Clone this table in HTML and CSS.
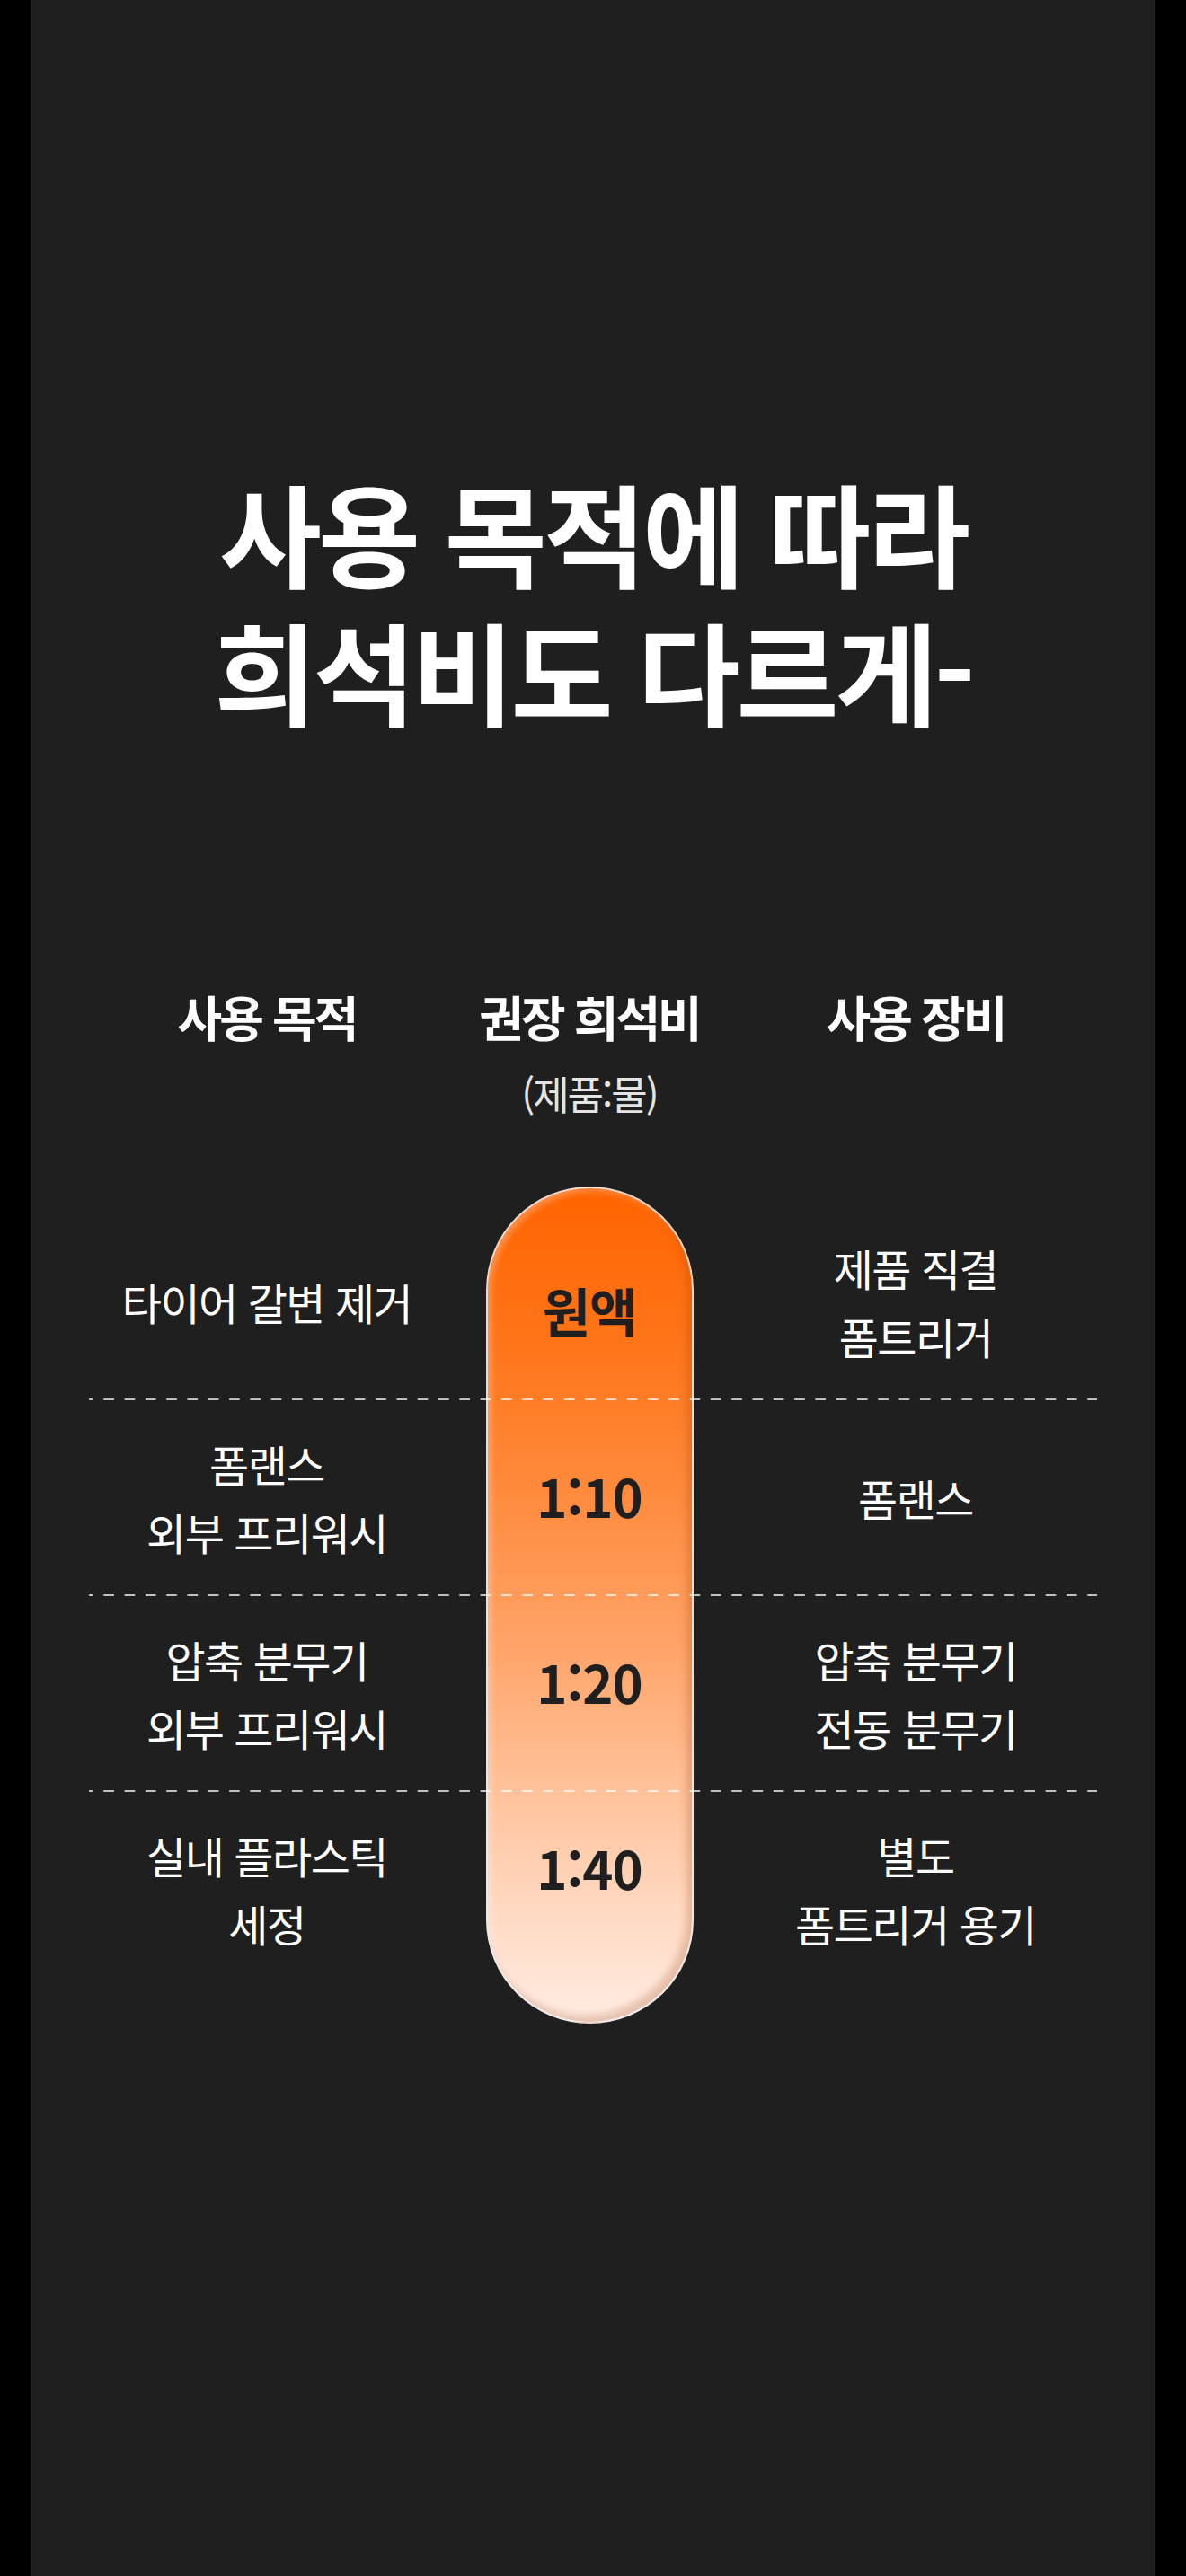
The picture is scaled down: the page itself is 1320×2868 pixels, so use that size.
FILE: index.html
```html
<!DOCTYPE html>
<html lang="ko">
<head>
<meta charset="utf-8">
<title>희석비</title>
<link rel="stylesheet" href="styles.css">
</head>
<body>
<main class="page">
  <h1 class="title">사용 목적에 따라<br>희석비도 다르게-</h1>

  <div class="head">
    <div class="head-cell">사용 목적</div>
    <div class="head-cell">권장 희석비<span class="head-sub">(제품:물)</span></div>
    <div class="head-cell">사용 장비</div>
  </div>

  <div class="table">
    <div class="pill">
      <div class="ratio">원액</div>
      <div class="ratio">1:10</div>
      <div class="ratio">1:20</div>
      <div class="ratio">1:40</div>
    </div>

    <div class="cell left r1">타이어 갈변 제거</div>
    <div class="cell right r1">제품 직결<br>폼트리거</div>

    <div class="line r2"></div>
    <div class="cell left r2">폼랜스<br>외부 프리워시</div>
    <div class="cell right r2">폼랜스</div>

    <div class="line r3"></div>
    <div class="cell left r3">압축 분무기<br>외부 프리워시</div>
    <div class="cell right r3">압축 분무기<br>전동 분무기</div>

    <div class="line r4"></div>
    <div class="cell left r4">실내 플라스틱<br>세정</div>
    <div class="cell right r4">별도<br>폼트리거 용기</div>
  </div>
</main>
</body>
</html>
```

FILE: styles.css
```css
html, body {
  margin: 0;
  padding: 0;
  background: #000;
}

body {
  font-family: "Noto Sans CJK KR", "Noto Sans", sans-serif;
  color: #fff;
}

.page {
  width: 1252px;
  min-height: 2868px;
  margin: 0 auto;
  background: #1f1f1f;
  padding-top: 514px;
  box-sizing: border-box;
}

.title {
  margin: 0;
  text-align: center;
  font-size: 124px;
  line-height: 154px;
  font-weight: 700;
  letter-spacing: -4px;
  color: #fff;
}

.head {
  width: 1122px;
  margin: 275px auto 0;
  display: grid;
  grid-template-columns: 396px 322px 404px;
}

.head-cell {
  display: flex;
  flex-direction: column;
  align-items: center;
  font-size: 54px;
  line-height: 70px;
  font-weight: 700;
  letter-spacing: -3px;
  color: #fff;
}

.head-sub {
  margin-top: 20px;
  font-size: 44px;
  line-height: 60px;
  font-weight: 400;
  letter-spacing: -2px;
  color: #e4e4e4;
}

.table {
  width: 1122px;
  margin: 74px auto 0;
  display: grid;
  grid-template-columns: 396px 322px 404px;
  grid-template-rows: 19px 218px 218px 218px 218px 41px;
}

.pill {
  grid-column: 2;
  grid-row: 1 / -1;
  justify-self: center;
  width: 231px;
  box-sizing: border-box;
  border-radius: 116px;
  border: 2px solid rgba(235, 235, 235, 0.85);
  background: linear-gradient(180deg, #ff6400 0%, #ff7418 18%, #ff8a3c 36%, #ffa266 54%, #ffbe94 70%, #ffd8c0 86%, #ffece2 100%);
  box-shadow: inset -6px -7px 8px rgba(140, 50, 0, 0.22), inset 4px 4px 6px rgba(255, 255, 255, 0.25);
  padding-top: 31px;
  display: flex;
  flex-direction: column;
  z-index: 0;
}

.ratio {
  height: 207px;
  display: flex;
  align-items: center;
  justify-content: center;
  font-size: 58px;
  font-weight: 700;
  letter-spacing: -1px;
  color: #1f1f1f;
}

.cell {
  align-self: center;
  text-align: center;
  font-size: 48px;
  line-height: 76px;
  font-weight: 400;
  letter-spacing: -1.5px;
  color: #fff;
  z-index: 1;
}

.left { grid-column: 1; }
.right { grid-column: 3; }

.r1 { grid-row: 2; }
.r2 { grid-row: 3; }
.r3 { grid-row: 4; }
.r4 { grid-row: 5; }

.line {
  grid-column: 1 / -1;
  align-self: start;
  height: 2px;
  margin-top: -1px;
  background-image: linear-gradient(90deg, rgba(255, 255, 255, 0.72) 0 12px, transparent 12px 100%);
  background-size: 23.3px 2px;
  background-repeat: repeat-x;
  background-position: -7px 0;
  z-index: 2;
}
```
